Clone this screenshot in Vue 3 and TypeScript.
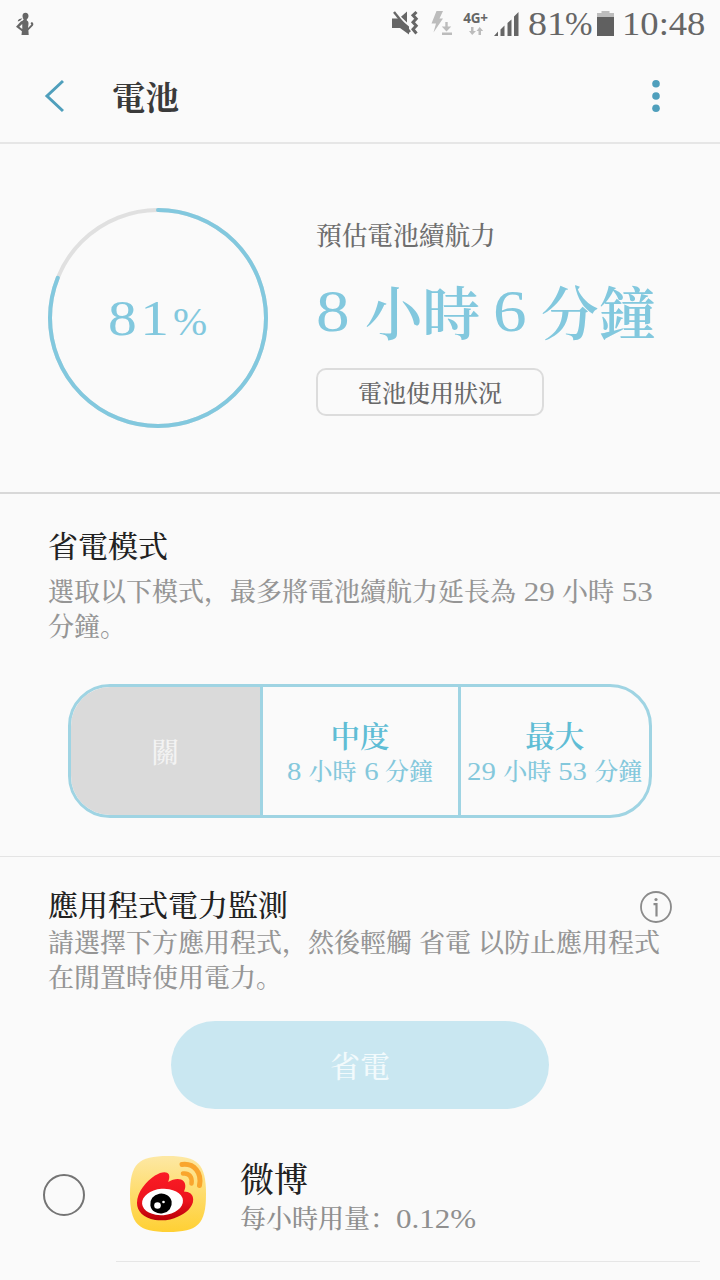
<script setup lang="ts">
const level = 81
const radius = 108
const circumference = 2 * Math.PI * radius
const dash = `${(circumference * level) / 100} ${circumference}`
</script>

<template>
  <main class="screen">
    <div class="status">
      <svg class="runner" width="20" height="24" viewBox="0 0 20 24">
        <path fill="#666" d="M7.500 3.800C7.500 1.800 8.700.8 10.500.8c2 0 3 1.300 3 3.200 0 1.500-.8 2.800-1.800 3.500l.1 1c1.300.6 1.900 1.700 1.700 3.200L13 16l3.400-3.400-.7-.9c.1-1.600 1-1.800 2.200-1 .5 1 .6 2 .1 2.700L13.400 18.200l.3 4.800H6.500l.4-3.800L1 14.800l4.800-5.200 1.700-.8 1.200-1.300c-.7-.9-1.200-2.200-1.200-3.700zM4.300 14.700l3 2.200-.1-5zM7.500 6.300C6 8.200 4.800 9.100 2.800 9.400c0-1.400 1-2.400 2.700-2.700z" />
      </svg>
      <div class="status-right">
        <svg class="s-mute" width="28" height="26" viewBox="0 0 28 26">
          <path fill="#666" d="M1 8.500h7.500L18 16.500v8L9 18H1zM16 1.500v11l-6-5.700z" />
          <path d="M3 2l16 20" stroke="#666" stroke-width="2.400" />
          <path d="M25.500 2l-3.500 3.300 3.200 3.400-3.200 3.500 3.200 3.500-3.200 3.500 3.500 4.300" fill="none" stroke="#666" stroke-width="3" />
        </svg>
        <svg class="s-flash" width="22" height="26" viewBox="0 0 22 26">
          <path fill="#bcbcbc" d="M5.500 0H12L8.500 7.500H12L2.500 21.500 5 12.500H.5z" />
          <path d="M15.500 11v7M11 22.700h10" stroke="#bcbcbc" stroke-width="2.400" />
          <path fill="#bcbcbc" d="M10.800 15.500h9.400l-4.700 5z" />
        </svg>
        <div class="net">
          <b>4G+</b>
          <svg width="14" height="9" viewBox="0 0 14 9">
            <path fill="#bcbcbc" d="M2 0h2.500v4H7L3.200 8 0 4h2zM9.500 8H12V4h2.300L10.700 0 7.500 4h2z" />
          </svg>
        </div>
        <svg class="s-signal" width="25" height="24" viewBox="0 0 25 24">
          <path fill="#666" d="M0 24l4-4.500V24zM6.500 17.500l4-4V24h-4zM13.500 11l4-3.500V24h-4zM20 4.500L24.500 0v24H20z" />
        </svg>
        <span class="status-num pct"><span class="wide">81</span>%</span>
        <svg class="s-batt" width="17" height="25" viewBox="0 0 17 25">
          <path fill="#bdbdbd" d="M4.500 0h8v2H17v5H0V2h4.500z" />
          <path fill="#606060" d="M0 6h17v19H0z" />
        </svg>
        <span class="status-num clock wide">10:48</span>
      </div>
    </div>

    <header class="bar">
      <svg class="back" width="20" height="34" viewBox="0 0 20 34">
        <path d="M19 2L3 17l16 15" fill="none" stroke="#4f9fbc" stroke-width="3" />
      </svg>
      <h1>電池</h1>
      <svg class="more" width="8" height="34" viewBox="0 0 8 34">
        <circle cx="4" cy="4.800" r="3.800" /><circle cx="4" cy="17" r="3.800" /><circle cx="4" cy="29.200" r="3.800" />
      </svg>
    </header>

    <section class="summary">
      <div class="gauge">
        <svg width="220" height="220" viewBox="0 0 220 220">
          <circle cx="110" cy="110" :r="radius" fill="none" stroke="#e0e0e0" stroke-width="4" />
          <circle cx="110" cy="110" :r="radius" fill="none" stroke="#82c8de" stroke-width="4" stroke-linecap="round" :stroke-dasharray="dash" transform="rotate(-90 110 110)" />
        </svg>
        <div class="gauge-text"><span class="lvl wide">81</span><span class="unit">%</span></div>
      </div>
      <div class="estimate">
        <p class="est-label">預估電池續航力</p>
        <p class="est-time"><span class="n1"><span class="wide">8</span></span>小時<span class="n2"><span class="wide">6</span></span>分鐘</p>
        <button class="usage">電池使用狀況</button>
      </div>
    </section>

    <section class="mode">
      <h2>省電模式</h2>
      <p class="body">選取以下模式，最多將電池續航力延長為<span class="num w4 wide"> 29 </span>小時<span class="num w3 wide"> 53</span><br>分鐘。</p>
      <div class="segments">
        <div class="seg off">關</div>
        <div class="seg"><strong>中度</strong><span class="sub"><i class="a1 wide">8 </i>小時<i class="a2 wide"> 6 </i>分鐘</span></div>
        <div class="seg"><strong>最大</strong><span class="sub"><i class="a3 wide">29 </i>小時<i class="a4 wide"> 53 </i>分鐘</span></div>
      </div>
    </section>

    <section class="monitor">
      <div class="mon-head">
        <h2>應用程式電力監測</h2>
        <svg width="32" height="32" viewBox="0 0 32 32">
          <circle cx="16" cy="16" r="15" fill="none" stroke="#8b8b8b" stroke-width="1.800" />
          <circle cx="16" cy="8.500" r="1.600" fill="#8b8b8b" />
          <path d="M13.500 13.200h3V25.500" fill="none" stroke="#8b8b8b" stroke-width="2.200" />
        </svg>
      </div>
      <p class="body">請選擇下方應用程式，然後輕觸<span class="key">省電</span>以防止應用程式<br>在閒置時使用電力。</p>
      <button class="save">省電</button>
      <div class="app">
        <span class="radio"></span>
        <svg class="logo" width="78" height="78" viewBox="0 0 78 78">
          <defs>
            <linearGradient id="tile" x1="0" y1="0" x2="0" y2="1"><stop offset="0" stop-color="#fde8a4" /><stop offset="1" stop-color="#ffd033" /></linearGradient>
            <linearGradient id="flame" x1="0" y1="0" x2="0" y2="1"><stop offset="0" stop-color="#fb1c26" /><stop offset=".6" stop-color="#ec131c" /><stop offset="1" stop-color="#b90008" /></linearGradient>
          </defs>
          <path fill="url(#tile)" d="M39 1C69 1 77 9 77 39S69 77 39 77 1 69 1 39 9 1 39 1z" />
          <path fill="url(#flame)" d="M26 20.500c6-3.800 12-4.500 13.800-1.200 1 2.500.4 4.700-.6 7.700 5.500-3.500 12.500-4 15.400-.8 2.300 2.600 2.200 7 .3 10.200 5.500 0 9.300 2.800 9.300 8 0 8-8 14-15 17-7 3.700-15 4.500-23 3.500C14 63 8 56 8 48c0-11 9-21.500 18-27.500z" />
          <ellipse cx="33.500" cy="47" rx="20.500" ry="13.200" fill="#fff" transform="rotate(-5 33.500 47)" />
          <ellipse cx="32" cy="48.500" rx="10.800" ry="10" fill="#000" transform="rotate(-10 32 48.500)" />
          <circle cx="28.500" cy="50.500" r="3.300" fill="#fff" /><circle cx="34.500" cy="47" r="1.300" fill="#fff" />
          <path d="M54 18.500c6-.8 9.500 3.500 8.500 10" fill="none" stroke="#f9a52d" stroke-width="4.500" stroke-linecap="round" />
          <path d="M53 9.500c12.500-1.500 20 8.500 17.500 21" fill="none" stroke="#f9a52d" stroke-width="5" stroke-linecap="round" />
        </svg>
        <div class="app-text">
          <div class="name">微博</div>
          <div class="use">每小時用量：<span class="num wide">0.12%</span></div>
        </div>
      </div>
      <div class="rule"></div>
    </section>
  </main>
</template>

<style>
body { margin: 0; background: #fafafa; overflow: hidden; }
</style>

<style scoped>
* { box-sizing: border-box; }
.screen {
  width: 720px; height: 1280px; overflow: hidden; background: #fafafa; color: #222; font-weight: 500;
  font-family: "Noto Serif CJK SC", "Noto Serif CJK TC", "Noto Sans CJK TC", serif;
}
h1, h2, p { margin: 0; font-weight: 500; }
button { font-family: inherit; font-weight: inherit; padding: 0; cursor: pointer; }
i { font-style: normal; }
.num, .sub i, .n1, .n2, .status-num, .gauge-text { font-family: "Liberation Serif", serif; font-weight: 400; white-space: pre; }
.wide { display: inline-block; transform: scaleX(1.15); transform-origin: left; }

.status { height: 48px; display: flex; justify-content: space-between; padding: 0 15px; }
.runner { margin-top: 12px; }
.status-right { display: flex; align-items: flex-start; }
.s-mute { margin: 10px 12px 0 0; }
.s-flash { margin: 11px 9px 0 0; }
.net { width: 27px; display: flex; flex-direction: column; align-items: center; padding-top: 12px; margin-right: 5px; }
.net b { font: 700 13.500px/13px "Open Sans", sans-serif; color: #666; letter-spacing: -.2px; }
.net svg { margin-top: 2px; }
.s-signal { margin: 12px 9px 0 0; }
.status-num { font-size: 33px; line-height: 48px; color: #666; }
.pct { width: 69px; }
.pct .wide { width: 37px; }
.s-batt { margin: 11px 8px 0 0; }
.clock { width: 83px; transform: scaleX(1.11); }

.bar { height: 96px; display: flex; align-items: center; border-bottom: 2px solid #e6e6e6; padding: 1px 60px 0 44px; }
.bar h1 { margin-left: 48px; font-size: 33.500px; line-height: 48px; font-weight: 700; color: #3a3a3a; }
.more { margin-left: auto; fill: #4f9fbc; }

.summary { height: 350px; border-bottom: 2px solid #d8d8d8; padding: 64px 0 0 48px; display: flex; }
.gauge { width: 220px; height: 220px; display: grid; }
.gauge > * { grid-area: 1 / 1; }
.gauge-text { align-self: center; color: #82c8de; line-height: 60px; padding: 12px 0 0 60px; }
.lvl { font-size: 50px; letter-spacing: 3px; width: 65px; }
.unit { font-size: 41px; }
.estimate { margin-left: 48px; }
.est-label { font-size: 25.700px; line-height: 36px; color: #6e6e6e; margin-top: 8px; }
.est-time { font-size: 57.500px; line-height: 76px; margin-top: 20px; color: #82c8de; white-space: nowrap; height: 96px; font-weight: 600; }
.n1, .n2 { font-size: 58.500px; line-height: 60px; display: inline-block; vertical-align: 4px; }
.n1 { width: 49px; }
.n2 { width: 61px; padding-left: 13px; }
.usage { display: block; width: 228px; height: 48px; border: 2px solid #dcdcdc; border-radius: 10px; background: none; color: #686868; font-size: 24px; line-height: 40px; }

.mode { height: 363px; border-bottom: 1px solid #e4e4e4; padding: 29px 0 0 48px; }
h2 { font-size: 30px; line-height: 42px; color: #222; }
.body { font-size: 26px; line-height: 35px; color: #959595; white-space: nowrap; }
.mode .body { margin-top: 7px; }
.num { font-size: 27px; line-height: 30px; }
.w4 { width: 46px; }
.w3 { width: 38px; }
.key { margin: 0 7px; }
.segments { width: 584px; height: 134px; margin: 42px 0 0 20px; border: 3px solid #9fd4e3; border-radius: 42px; overflow: hidden; display: grid; grid-template-columns: 188.500px 198px 191.500px; }
.seg { display: flex; flex-direction: column; align-items: center; justify-content: center; padding-top: 1px; color: #5fbdd5; white-space: nowrap; }
.seg + .seg { border-left: 3px solid #9fd4e3; }
.seg.off { background: #dadada; color: #f3f3f3; font-size: 28px; padding-top: 0; }
.seg strong { font-size: 29.500px; line-height: 36px; font-weight: 600; }
.sub { font-size: 24px; line-height: 36px; color: #84c8dc; }
.sub i { font-size: 25px; line-height: 30px; }
.a1 { width: 21.500px; }
.a2 { width: 28.500px; }
.a3 { width: 36px; }
.a4 { width: 43px; }

.monitor { padding: 25px 0 0 48px; }
.mon-head { display: flex; justify-content: space-between; align-items: flex-start; padding-right: 48px; height: 41px; }
.mon-head svg { margin-top: 9px; }
.save { display: block; width: 378px; height: 88px; margin: 28px 0 0 123px; border: 0; border-radius: 44px; background: #c9e7f1; color: #f2fafc; font-size: 30px; line-height: 40px; padding-bottom: 3px; }
.app { height: 152px; display: flex; padding-top: 46px; margin-left: -5px; }
.radio { width: 42px; height: 42px; margin-top: 19px; border: 2px solid #747474; border-radius: 50%; }
.logo { margin-left: 44px; }
.app-text { margin-left: 33px; }
.name { font-size: 34px; line-height: 46px; color: #222; }
.use { font-size: 26px; line-height: 32px; color: #8f8f8f; }
.rule { height: 1px; background: #e6e6e6; margin: 0 20px 0 68px; }
</style>
